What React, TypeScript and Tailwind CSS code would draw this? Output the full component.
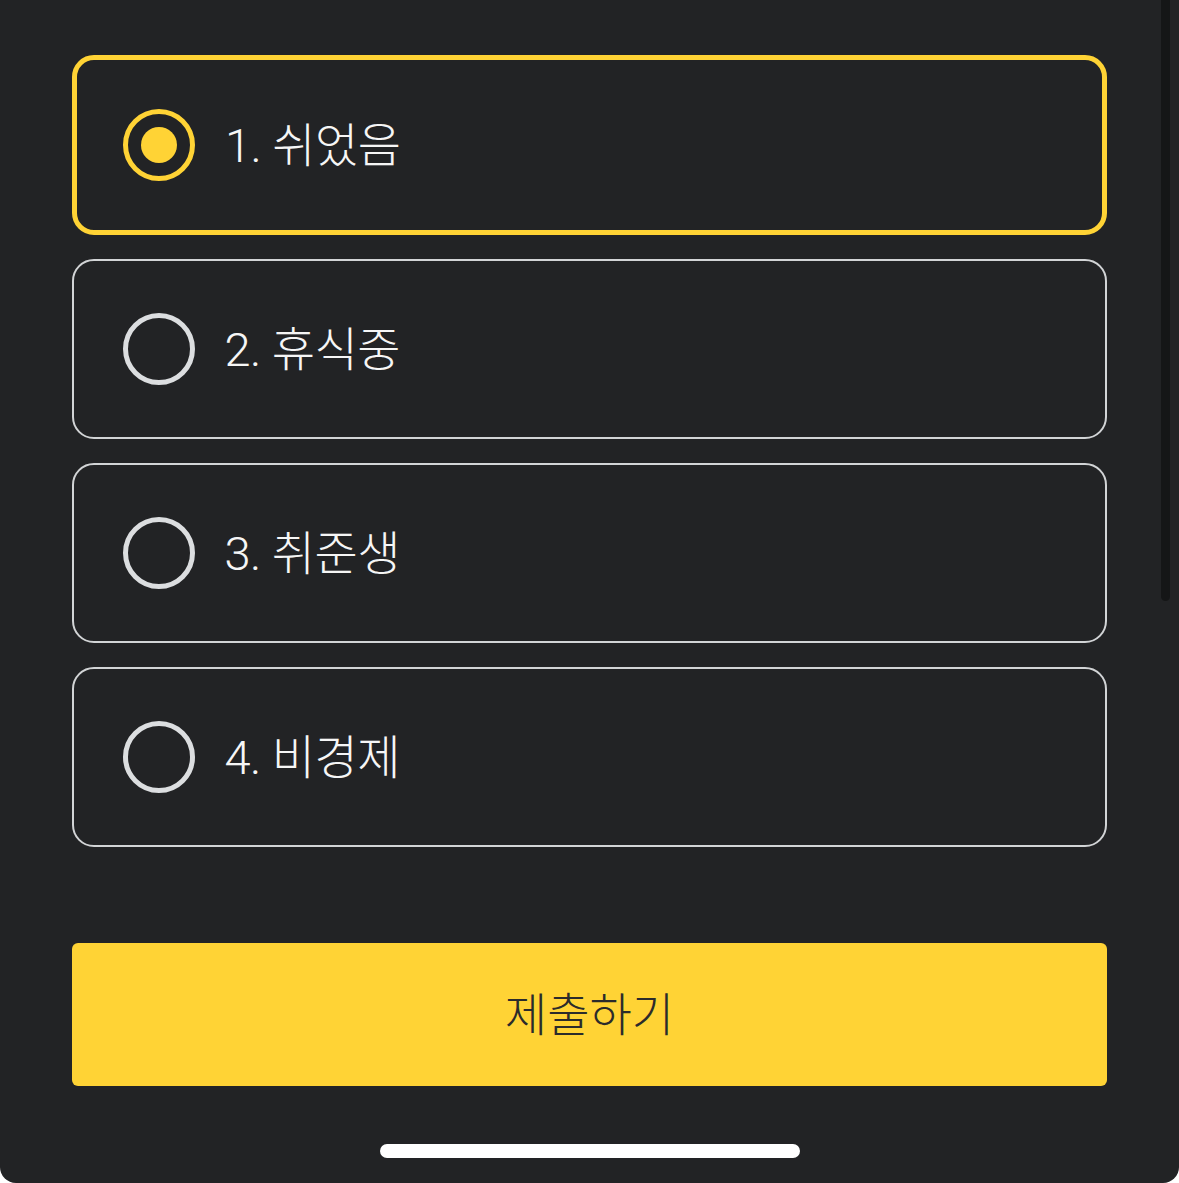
import React from "react";

const options = ["1. 쉬었음", "2. 휴식중", "3. 취준생", "4. 비경제"];

export default function App() {
  const selected = 0;
  return (
    <div className="w-[1179px] h-[1183px] bg-white" style={{ fontFamily: 'Roboto, "Noto Sans CJK KR", sans-serif' }}>
      <div className="relative w-full h-full bg-[#222325] rounded-b-[16px] flex flex-col">
        <div className="absolute right-[9px] top-0 w-[9px] h-[601px] bg-[#151617] rounded-b-full" />
        <div className="flex flex-col gap-[24px] pt-[55px] px-[72px] w-full">
          {options.map((o, i) => {
            const sel = i === selected;
            return (
              <div
                key={o}
                className={
                  sel
                    ? "h-[180px] border-[5px] border-[#FFD335] rounded-[22px] flex items-center pl-[46px]"
                    : "h-[180px] border-[2.5px] border-[#d2d4d6] rounded-[22px] flex items-center pl-[48.5px]"
                }
              >
                {sel ? (
                  <div className="w-[72px] h-[72px] rounded-full border-[5px] border-[#FFD335] flex items-center justify-center">
                    <div className="w-[36px] h-[36px] rounded-full bg-[#FFD335]" />
                  </div>
                ) : (
                  <div className="w-[72px] h-[72px] rounded-full border-[5px] border-[#dcdee0]" />
                )}
                <span className="ml-[30px] text-[47px] font-light leading-none text-[#f6f6f6] tracking-[-0.5px]">{o}</span>
              </div>
            );
          })}
        </div>
        <div className="mt-[96px] mx-[72px] w-[1035px] h-[143px] bg-[#FFD335] rounded-[6px] flex items-center justify-center">
          <span className="text-[46px] font-light leading-none text-[#2b2b2b]">제출하기</span>
        </div>
        <div className="mt-[58px] flex justify-center">
          <div className="w-[420px] h-[14px] bg-white rounded-full" />
        </div>
      </div>
    </div>
  );
}
